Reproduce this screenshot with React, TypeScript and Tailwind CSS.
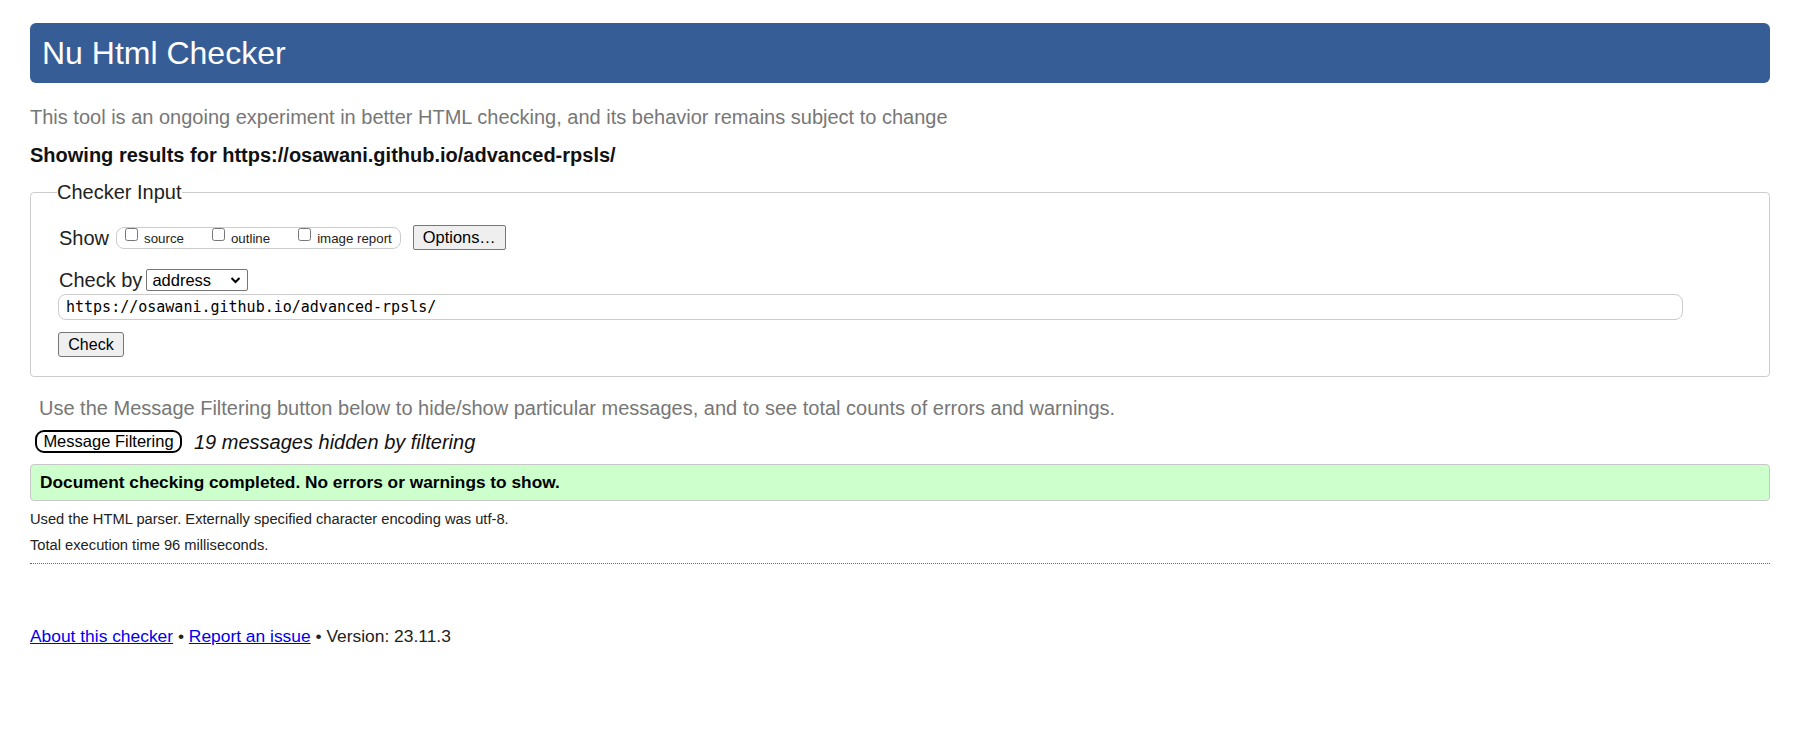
import { useState } from 'react';

const sans = "font-['Liberation_Sans',Arial,sans-serif]";

export default function App() {
  const [url, setUrl] = useState('https://osawani.github.io/advanced-rpsls/');

  return (
    <div className={`${sans} bg-white text-[#222] min-h-[753px] pl-[30px] pr-[32px] pt-[23px]`}>
      <h1 className="h-[60px] rounded-[6px] bg-[#365d95] text-white text-[32px] leading-none pl-[12px] flex items-center">
        Nu Html Checker
      </h1>

      <p className="mt-[22px] text-[20px] leading-[24px] text-[#777]">
        This tool is an ongoing experiment in better HTML checking, and its behavior remains subject to change
      </p>

      <p className="mt-[14px] text-[20px] leading-[24px] font-bold text-[#111]">
        Showing results for https://osawani.github.io/advanced-rpsls/
      </p>

      <fieldset className="mt-[14px] border border-[#ccc] rounded-[4px] pl-[27px] pr-[20px] pt-[21px] pb-[19px]">
        <legend className="text-[20px] leading-[23px] -ml-[1px] text-[#222]">Checker Input</legend>

        <div className="flex items-center h-[25px]">
          <span className="text-[20px] leading-none ml-[1px]">Show</span>
          <div className="ml-[7px] h-[22px] border border-[#ccc] rounded-[8px] flex items-start pl-[8px] pr-[8px] text-[13.3px]">
            <label className="flex items-start">
              <input type="checkbox" className="w-[13px] h-[13px] m-0" />
              <span className="ml-[6px] mt-[3px] leading-[15px]">source</span>
            </label>
            <label className="flex items-start ml-[28px]">
              <input type="checkbox" className="w-[13px] h-[13px] m-0" />
              <span className="ml-[6px] mt-[3px] leading-[15px]">outline</span>
            </label>
            <label className="flex items-start ml-[28px]">
              <input type="checkbox" className="w-[13px] h-[13px] m-0" />
              <span className="ml-[6px] mt-[3px] leading-[15px]">image report</span>
            </label>
          </div>
          <button className="ml-[12px] h-[25px] w-[93px] bg-[#efefef] border border-[#767676] rounded-[2px] text-[16.4px] leading-none text-black">
            Options…
          </button>
        </div>

        <div className="flex items-center h-[22px] mt-[19px]">
          <span className="text-[20px] leading-none ml-[1px]">Check by</span>
          <div className="ml-[4px] w-[102px] h-[22px] border border-[#767676] rounded-[2px] flex items-center justify-between pl-[5px] pr-[6px] text-[16.5px] text-black">
            <span>address</span>
            <svg width="11" height="8" viewBox="0 0 11 8" fill="none">
              <path d="M1.5 2 L5.5 6 L9.5 2" stroke="black" strokeWidth="2" />
            </svg>
          </div>
        </div>

        <input
          value={url}
          onChange={(e) => setUrl(e.target.value)}
          className="mt-[3px] block w-[1625px] h-[26px] border border-[#ccc] rounded-[8px] px-[7px] font-['DejaVu_Sans_Mono',monospace] text-[15px] text-black outline-none"
        />

        <button className="mt-[12px] block w-[66px] h-[25px] bg-[#efefef] border border-[#767676] rounded-[3px] text-[16px] leading-none text-black">
          Check
        </button>
      </fieldset>

      <p className="mt-[19px] pl-[9px] text-[20px] leading-[24px] text-[#777]">
        Use the Message Filtering button below to hide/show particular messages, and to see total counts of errors and warnings.
      </p>

      <div className="mt-[10px] flex items-center h-[23px] pl-[5px]">
        <button className="h-[23px] w-[147px] border-2 border-black rounded-[9px] bg-white text-[16.5px] leading-none text-black">
          Message Filtering
        </button>
        <span className="ml-[12px] text-[20px] italic text-[#111]">19 messages hidden by filtering</span>
      </div>

      <div className="mt-[11px] h-[37px] border border-[#c8c8c8] rounded-[4px] bg-[#ccffcc] flex items-center pl-[9px] text-[17.3px] font-bold text-black">
        Document checking completed. No errors or warnings to show.
      </div>

      <p className="mt-[10px] text-[14.7px] leading-[17px] text-[#222]">
        Used the HTML parser. Externally specified character encoding was utf-8.
      </p>
      <p className="mt-[9px] text-[14.7px] leading-[17px] text-[#222]">Total execution time 96 milliseconds.</p>

      <div className="mt-[9px] border-t border-dotted border-[#666]" />

      <p className="mt-[62px] text-[17.4px] leading-[20px] text-[#222]">
        <a href="#" className="text-[#0000ee] underline">About this checker</a>
        {' • '}
        <a href="#" className="text-[#0000ee] underline">Report an issue</a>
        {' • Version: 23.11.3'}
      </p>
    </div>
  );
}
